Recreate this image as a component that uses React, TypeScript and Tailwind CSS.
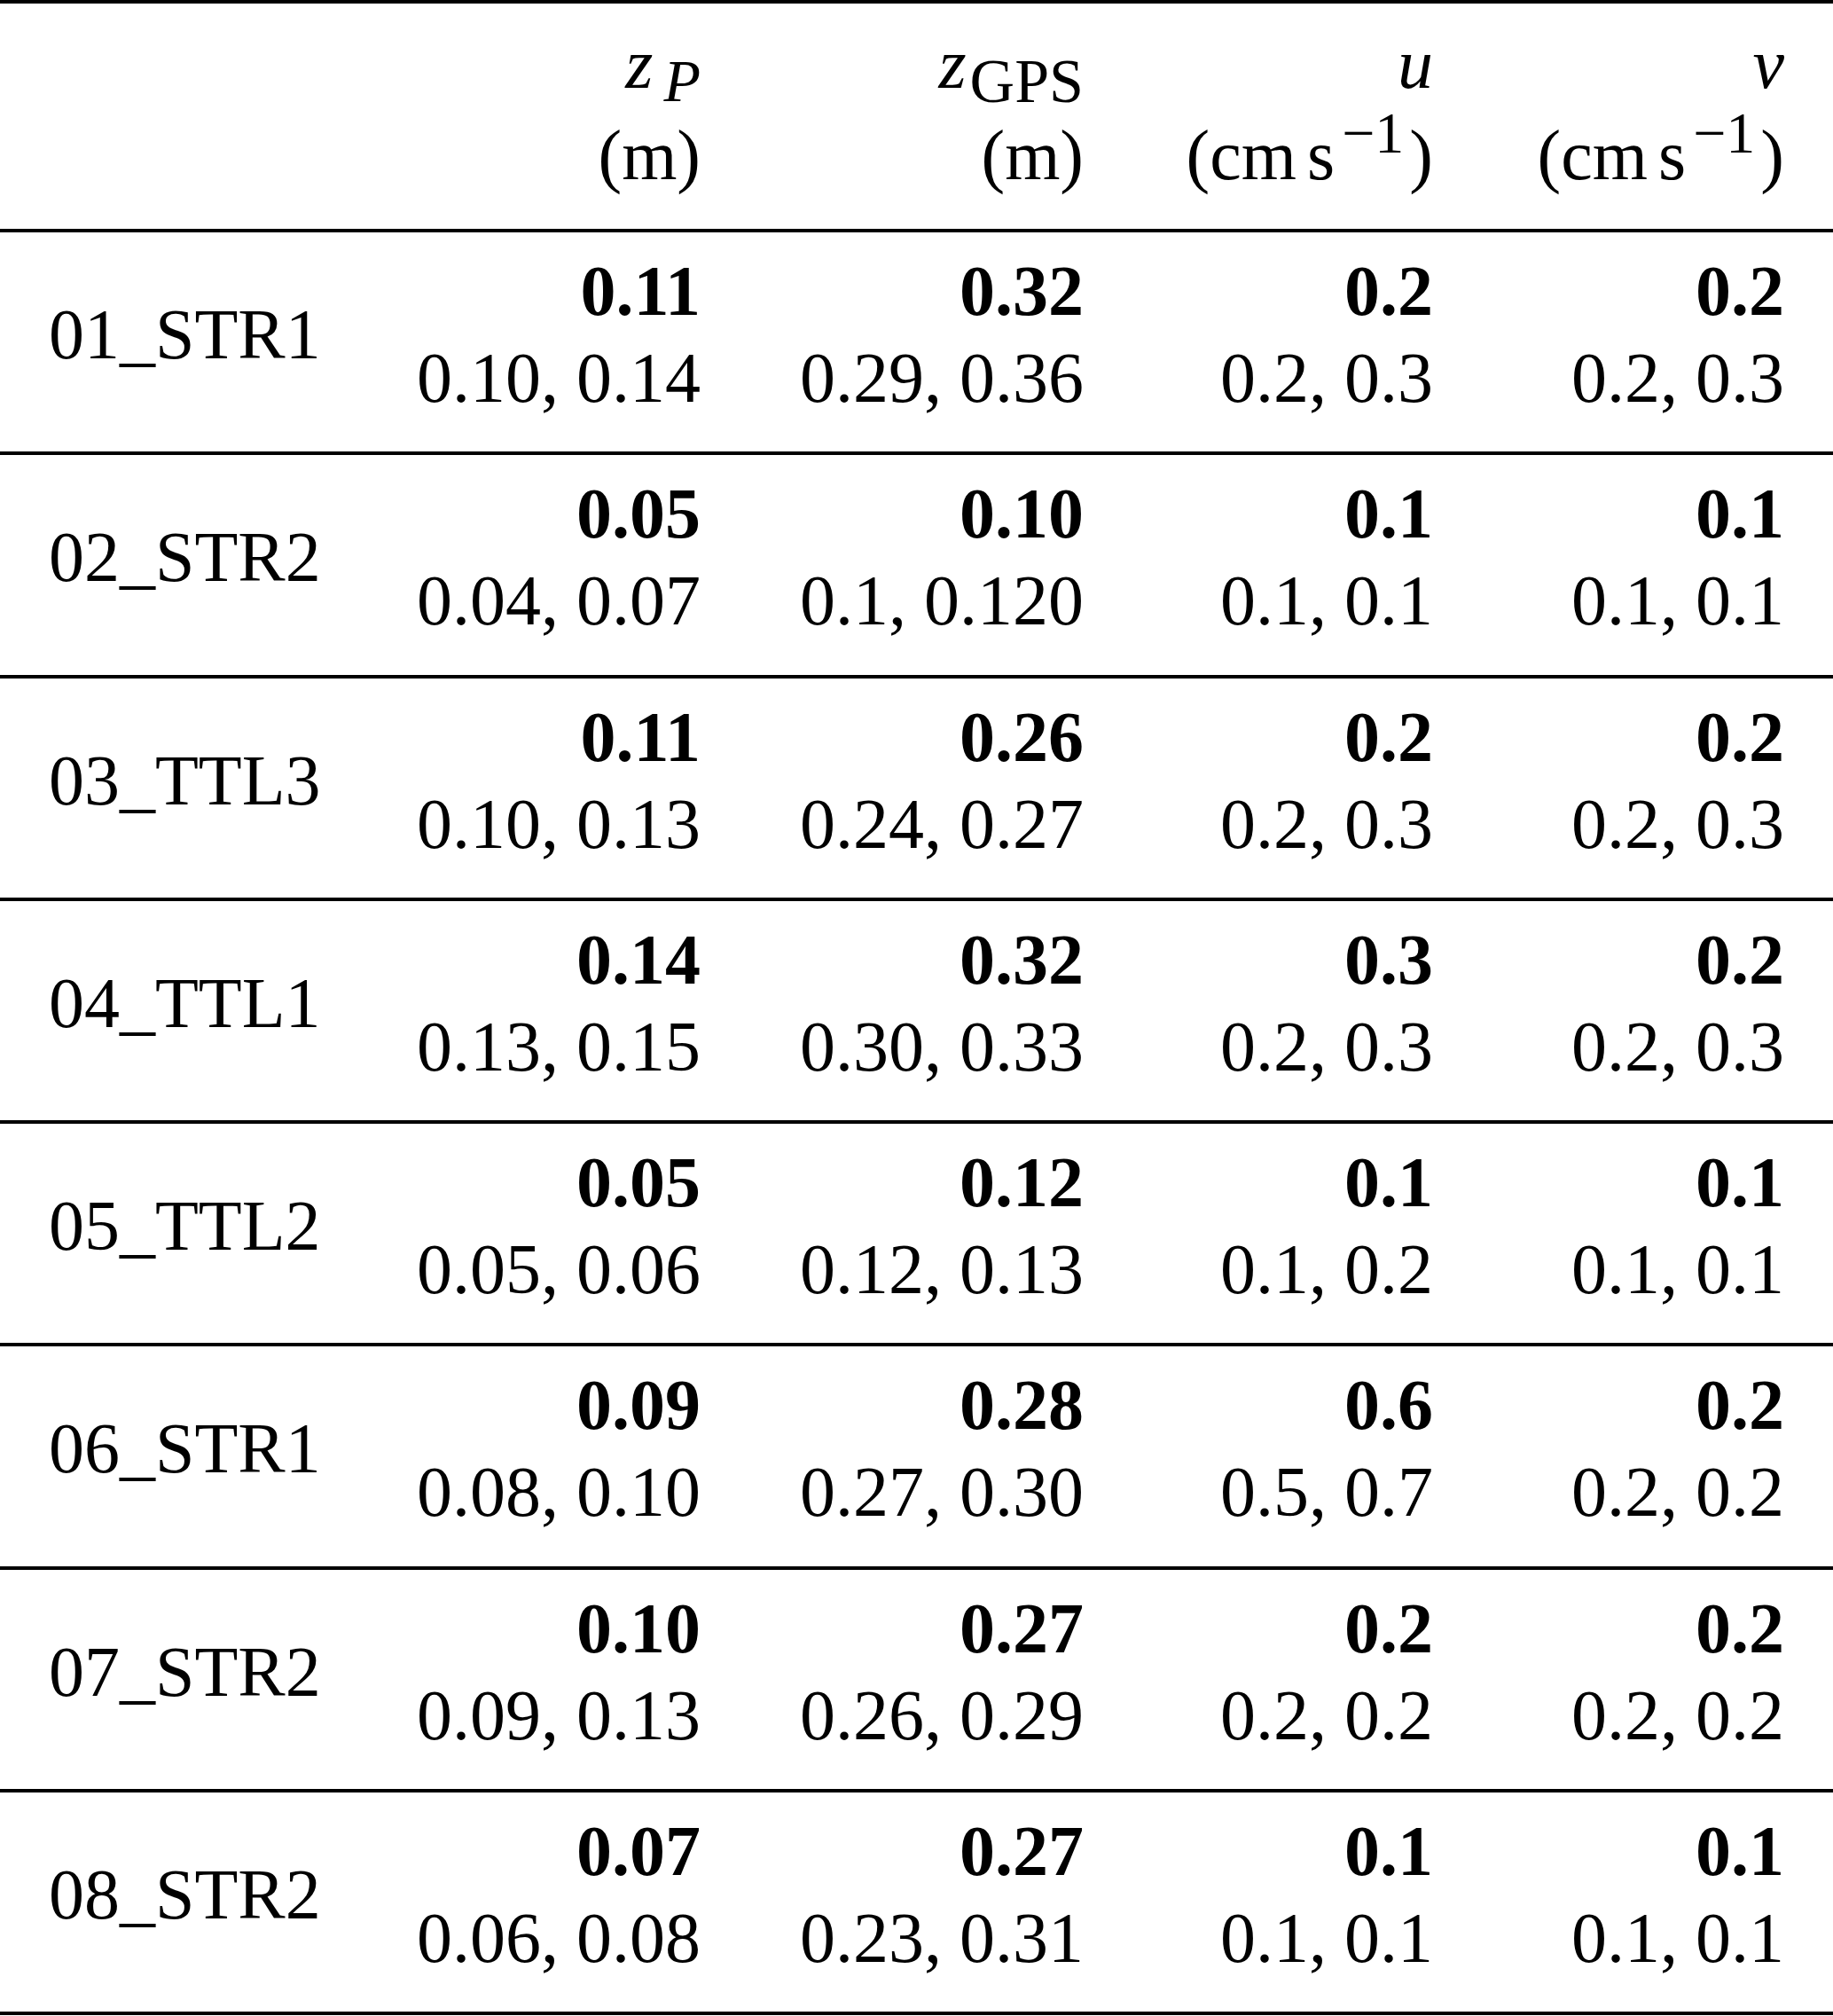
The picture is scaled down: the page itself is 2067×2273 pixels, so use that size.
const rows: [string, [string, string][]][] = [
  ["01_STR1", [["0.11", "0.10, 0.14"], ["0.32", "0.29, 0.36"], ["0.2", "0.2, 0.3"], ["0.2", "0.2, 0.3"]]],
  ["02_STR2", [["0.05", "0.04, 0.07"], ["0.10", "0.1, 0.120"], ["0.1", "0.1, 0.1"], ["0.1", "0.1, 0.1"]]],
  ["03_TTL3", [["0.11", "0.10, 0.13"], ["0.26", "0.24, 0.27"], ["0.2", "0.2, 0.3"], ["0.2", "0.2, 0.3"]]],
  ["04_TTL1", [["0.14", "0.13, 0.15"], ["0.32", "0.30, 0.33"], ["0.3", "0.2, 0.3"], ["0.2", "0.2, 0.3"]]],
  ["05_TTL2", [["0.05", "0.05, 0.06"], ["0.12", "0.12, 0.13"], ["0.1", "0.1, 0.2"], ["0.1", "0.1, 0.1"]]],
  ["06_STR1", [["0.09", "0.08, 0.10"], ["0.28", "0.27, 0.30"], ["0.6", "0.5, 0.7"], ["0.2", "0.2, 0.2"]]],
  ["07_STR2", [["0.10", "0.09, 0.13"], ["0.27", "0.26, 0.29"], ["0.2", "0.2, 0.2"], ["0.2", "0.2, 0.2"]]],
  ["08_STR2", [["0.07", "0.06, 0.08"], ["0.27", "0.23, 0.31"], ["0.1", "0.1, 0.1"], ["0.1", "0.1, 0.1"]]],
];

// column widths, right-aligned numbers
const colW = ["w-[390px]", "w-[432px]", "w-[394px]", "w-[396px]"];

function PerSecond() {
  return (
    <>
      (cm<span className="ml-[12px]">s</span>
      <span className="relative -top-[30px] ml-[8px] text-[66px] leading-none">−1</span>
      <span className="ml-[6px]">)</span>
    </>
  );
}

export default function App() {
  return (
    <div
      className="w-[2067px] bg-white text-black text-[80px]"
      style={{ fontFamily: '"Liberation Serif", "Times New Roman", serif' }}
    >
      {/* header */}
      <div className="flex border-t-[4px] border-black h-[258px] pt-[17px] leading-[103px]">
        <div className="w-[400px]" />
        <div className={`${colW[0]} flex flex-col items-end`}>
          <div>
            <span className="italic">z</span>
            <span className="relative top-[15px] ml-[12px] italic text-[68px] leading-none">P</span>
          </div>
          <div>(m)</div>
        </div>
        <div className={`${colW[1]} flex flex-col items-end`}>
          <div>
            <span className="italic">z</span>
            <span className="relative top-[16px] ml-[4px] text-[70px] leading-none">GPS</span>
          </div>
          <div>(m)</div>
        </div>
        <div className={`${colW[2]} flex flex-col items-end`}>
          <div className="italic">u</div>
          <div>
            <PerSecond />
          </div>
        </div>
        <div className={`${colW[3]} flex flex-col items-end`}>
          <div className="italic">v</div>
          <div>
            <PerSecond />
          </div>
        </div>
      </div>

      {/* body */}
      {rows.map(([name, cells]) => (
        <div
          key={name}
          className="flex border-t-[4px] border-black h-[251.25px] pt-[17px] leading-[98px]"
        >
          <div className="w-[400px] h-[196px] flex items-center pl-[55px]">{name}</div>
          {cells.map(([best, range], i) => (
            <div key={i} className={`${colW[i]} flex flex-col items-end`}>
              <div className="font-bold">{best}</div>
              <div>{range}</div>
            </div>
          ))}
        </div>
      ))}
      <div className="border-t-[4px] border-black" />
    </div>
  );
}
